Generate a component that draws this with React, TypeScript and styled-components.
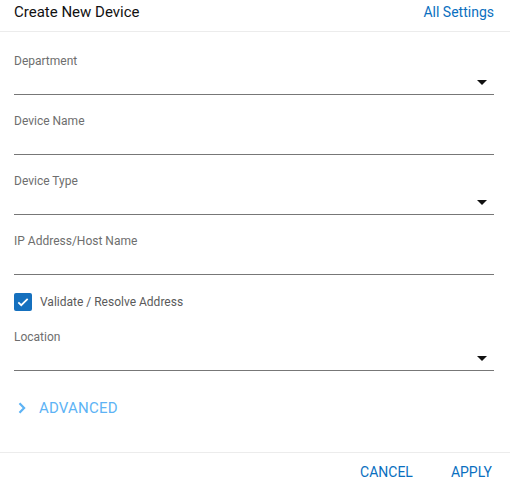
import * as React from 'react';
import styled, {createGlobalStyle} from 'styled-components';

const GlobalStyle = createGlobalStyle`
    body {
        margin: 0;
        background: #fff;
        font-family: Roboto, "Liberation Sans", sans-serif;
    }
`;

const Dialog = styled.div`
    width: 510px;
    height: 496px;
    display: flex;
    flex-direction: column;
    background: #fff;
`;

const Header = styled.div`
    height: 31px;
    border-bottom: 1px solid #ececec;
    display: flex;
    justify-content: space-between;
    align-items: flex-start;
    padding: 0 16px 0 14px;
`;

const Title = styled.div`
    font-size: 15px;
    line-height: 24px;
    color: #111;
`;

const LinkText = styled.a`
    font-size: 14px;
    line-height: 24px;
    color: #0a6fc0;
    text-decoration: none;
    cursor: pointer;
`;

const Form = styled.div`
    flex: 1;
    padding: 3px 16px 0 14px;
    display: flex;
    flex-direction: column;
`;

const Field = styled.div`
    margin-top: 19px;
    display: flex;
    flex-direction: column;
`;

const Label = styled.label`
    font-size: 12px;
    line-height: 14px;
    color: #6e6e6e;
`;

const InputArea = styled.div`
    height: 27px;
    border-bottom: 1px solid #777;
    display: flex;
    justify-content: flex-end;
    align-items: flex-end;
    padding-bottom: 9px;
    box-sizing: border-box;
`;

const Arrow = styled.div`
    width: 0;
    height: 0;
    border-left: 5px solid transparent;
    border-right: 5px solid transparent;
    border-top: 5px solid #111;
    margin-right: 7px;
`;

const CheckRow = styled.div`
    margin-top: 18px;
    height: 18px;
    display: flex;
    align-items: center;
    gap: 8px;
`;

const CheckBox = styled.div`
    width: 18px;
    height: 18px;
    border-radius: 2px;
    background: #1570be;
    display: flex;
    align-items: center;
    justify-content: center;
`;

const CheckLabel = styled.span`
    font-size: 12px;
    color: #5a5a5a;
    line-height: 18px;
`;

const AdvancedRow = styled.div`
    margin-top: 27px;
    display: flex;
    align-items: center;
    gap: 13px;
    padding-left: 4px;
    cursor: pointer;
`;

const AdvancedText = styled.span`
    font-size: 15px;
    line-height: 20px;
    color: #5db3f5;
    letter-spacing: 0.2px;
`;

const Footer = styled.div`
    height: 43px;
    border-top: 1px solid #ececec;
    display: flex;
    justify-content: flex-end;
    align-items: flex-start;
    padding-right: 18px;
    gap: 38px;
`;

const FooterButton = styled.button`
    border: none;
    background: none;
    padding: 0;
    margin-top: 9px;
    font-family: Roboto, "Liberation Sans", sans-serif;
    font-size: 14px;
    line-height: 20px;
    color: #0a6fc0;
    cursor: pointer;
`;

interface IFieldProps {
    label: string;
    select?: boolean;
}

const FormField: React.FC<IFieldProps> = ({label, select}) => (
    <Field>
        <Label>{label}</Label>
        <InputArea>{select && <Arrow/>}</InputArea>
    </Field>
);

export default function App() {
    return (
        <Dialog>
            <GlobalStyle/>
            <Header>
                <Title>Create New Device</Title>
                <LinkText>All Settings</LinkText>
            </Header>
            <Form>
                <FormField label="Department" select/>
                <FormField label="Device Name"/>
                <FormField label="Device Type" select/>
                <FormField label="IP Address/Host Name"/>
                <CheckRow>
                    <CheckBox>
                        <svg width="14" height="14" viewBox="0 0 24 24">
                            <path d="M4 12.5l5 5L20 6.5" fill="none" stroke="#fff" strokeWidth="3"/>
                        </svg>
                    </CheckBox>
                    <CheckLabel>Validate / Resolve Address</CheckLabel>
                </CheckRow>
                <FormField label="Location" select/>
                <AdvancedRow>
                    <svg width="8" height="12" viewBox="0 0 8 12">
                        <path d="M1.5 1.2l4.6 4.8-4.6 4.8" fill="none" stroke="#5db3f5" strokeWidth="2.2"/>
                    </svg>
                    <AdvancedText>ADVANCED</AdvancedText>
                </AdvancedRow>
            </Form>
            <Footer>
                <FooterButton>CANCEL</FooterButton>
                <FooterButton>APPLY</FooterButton>
            </Footer>
        </Dialog>
    );
}
